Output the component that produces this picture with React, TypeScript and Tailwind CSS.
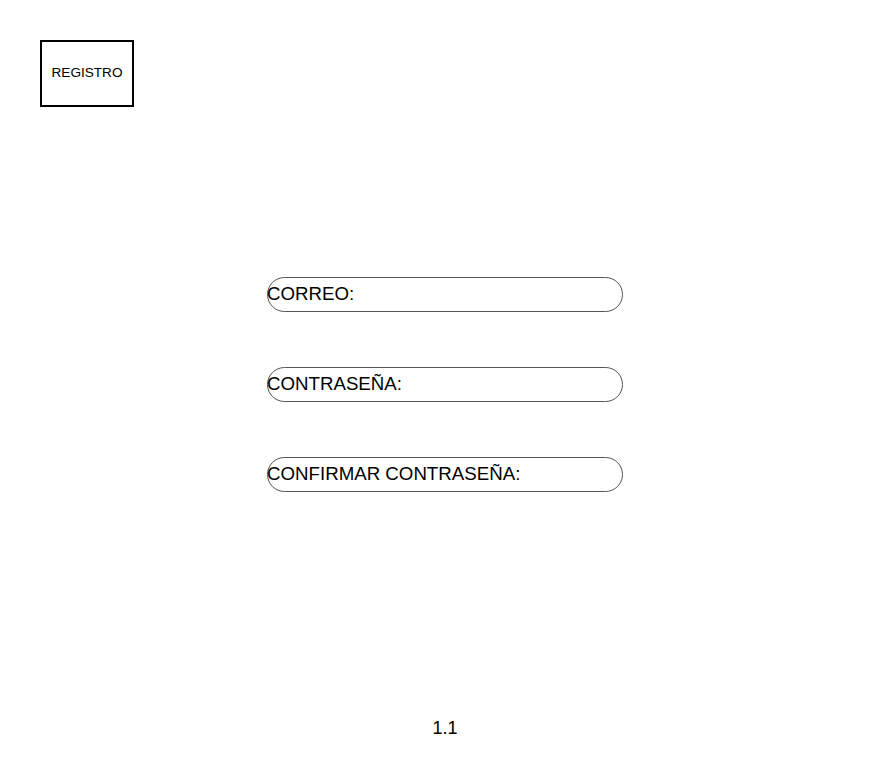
const fields = ["CORREO:", "CONTRASEÑA:", "CONFIRMAR CONTRASEÑA:"]

function Field({ label }: { label: string }) {
  return (
    <div className="flex h-[35px] w-[356px] items-center rounded-full border border-[#555]">
      <span className="-ml-px -mt-px text-[18.7px] leading-none text-black">{label}</span>
    </div>
  )
}

export default function App() {
  return (
    <main className="relative h-[768px] w-full bg-white font-['Liberation_Sans',Arial,sans-serif] text-black">
      <div className="pl-10 pt-10">
        <div className="flex h-[67px] w-[94px] items-center justify-center border-2 border-black">
          <span className="text-[13.6px]">REGISTRO</span>
        </div>
      </div>
      <div className="mt-[170px] flex flex-col items-center gap-[55px]">
        {fields.map((f) => (
          <Field key={f} label={f} />
        ))}
      </div>
      <p className="mt-[226px] text-center text-[18px] leading-[21px]">1.1</p>
    </main>
  )
}
